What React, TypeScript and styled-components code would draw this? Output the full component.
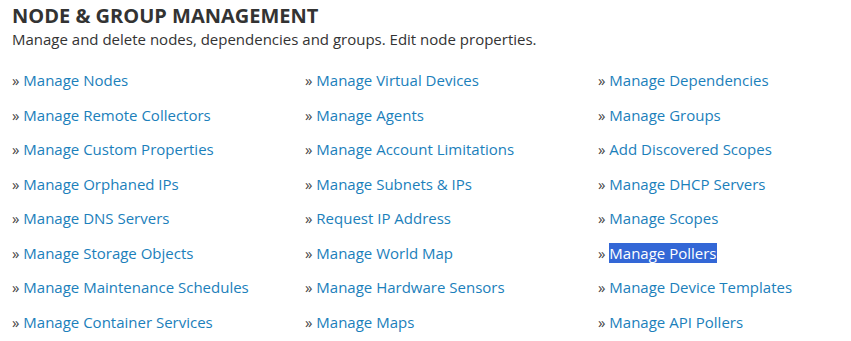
import React from "react";
import styled, { createGlobalStyle } from "styled-components";

const Global = createGlobalStyle`
  html, body { margin: 0; padding: 0; background: #ffffff; }
  body { font-family: "Open Sans", "DejaVu Sans", sans-serif; }
`;

const Page = styled.div`
  padding: 3px 12px 0 12px;
`;

const Title = styled.h1`
  margin: 0;
  font-size: 20px;
  font-weight: 700;
  line-height: 26px;
  color: #333333;
  text-transform: uppercase;
`;

const Subtitle = styled.p`
  margin: 0;
  font-size: 15px;
  line-height: 20px;
  color: #333333;
`;

const Grid = styled.div`
  display: grid;
  grid-template-columns: 293px 293px 240px;
  grid-auto-rows: 34.5px;
  margin-top: 21px;
`;

const Item = styled.div`
  font-size: 15px;
  line-height: 20px;
  color: #444444;
  white-space: nowrap;
`;

const Bullet = styled.span`
  color: #444444;
`;

const Link = styled.a<{ $selected?: boolean }>`
  color: ${(p) => (p.$selected ? "#ffffff" : "#1b80bb")};
  background: ${(p) => (p.$selected ? "#3367d6" : "transparent")};
  text-decoration: none;
  cursor: pointer;
`;

const rows: string[][] = [
  ["Manage Nodes", "Manage Virtual Devices", "Manage Dependencies"],
  ["Manage Remote Collectors", "Manage Agents", "Manage Groups"],
  ["Manage Custom Properties", "Manage Account Limitations", "Add Discovered Scopes"],
  ["Manage Orphaned IPs", "Manage Subnets & IPs", "Manage DHCP Servers"],
  ["Manage DNS Servers", "Request IP Address", "Manage Scopes"],
  ["Manage Storage Objects", "Manage World Map", "Manage Pollers"],
  ["Manage Maintenance Schedules", "Manage Hardware Sensors", "Manage Device Templates"],
  ["Manage Container Services", "Manage Maps", "Manage API Pollers"],
];

export default function App() {
  return (
    <Page>
      <Global />
      <Title>Node &amp; Group Management</Title>
      <Subtitle>Manage and delete nodes, dependencies and groups. Edit node properties.</Subtitle>
      <Grid>
        {rows.flat().map((label) => (
          <Item key={label}>
            <Bullet>» </Bullet>
            <Link $selected={label === "Manage Pollers"}>{label}</Link>
          </Item>
        ))}
      </Grid>
    </Page>
  );
}
